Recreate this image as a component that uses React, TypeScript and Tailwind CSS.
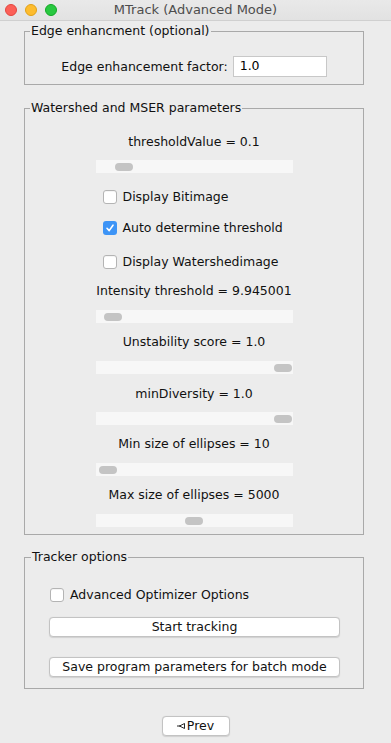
import React from 'react'

const FONT = { fontFamily: '"DejaVu Sans", "Noto Sans", sans-serif' }

function Checkbox({ checked, label }: { checked?: boolean; label: string }) {
  return (
    <div className="flex h-[16px] items-center gap-[6px]">
      {checked ? (
        <span className="flex h-[14px] w-[14px] items-center justify-center rounded-[3px] bg-[#3d94f6]">
          <svg width="10" height="10" viewBox="0 0 10 10">
            <path d="M2 5.3 L4.2 7.6 L8 2.2" fill="none" stroke="#fff" strokeWidth="1.6" strokeLinecap="round" strokeLinejoin="round" />
          </svg>
        </span>
      ) : (
        <span className="h-[14px] w-[14px] rounded-[3px] border border-[#b4b4b4] bg-white shadow-[inset_0_1px_0_rgba(0,0,0,0.04)]" />
      )}
      <span className="text-[12.5px] leading-[16px] text-[#111]">{label}</span>
    </div>
  )
}

function Slider({ pos, mt }: { pos: number; mt: string }) {
  // pos: left offset of the thumb inside the 197px track
  return (
    <div className={`relative h-[13px] w-full bg-[#f7f7f7] ${mt}`}>
      <div className="absolute top-[3px] h-[8px] w-[18px] rounded-full bg-[#c4c4c4]" style={{ left: pos }} />
    </div>
  )
}

function Label({ text, mt }: { text: string; mt: string }) {
  return <div className={`h-[16px] whitespace-nowrap text-center text-[12.5px] leading-[16px] text-[#111] ${mt}`}>{text}</div>
}

function Button({ children, className }: { children: React.ReactNode; className: string }) {
  return (
    <button className={`flex h-[20px] items-center justify-center rounded-[4px] border border-[#c3c3c3] bg-white text-[12.5px] leading-[16px] text-[#111] shadow-[0_0.5px_1px_rgba(0,0,0,0.12)] ${className}`}>
      {children}
    </button>
  )
}

export default function App() {
  return (
    <div className="h-[743px] w-[391px] overflow-hidden bg-[#ececec]" style={FONT}>
      {/* Title bar */}
      <div className="relative flex h-[21px] items-center justify-center border-b border-[#d0d0d0] bg-gradient-to-b from-[#e9e9e9] to-[#e2e2e2]">
        <div className="absolute left-[5px] top-[4px] flex gap-[8px]">
          <span className="h-[12px] w-[12px] rounded-full border border-[#e2463f] bg-[#fc5f57]" />
          <span className="h-[12px] w-[12px] rounded-full border border-[#e1a116] bg-[#fdbc2e]" />
          <span className="h-[12px] w-[12px] rounded-full border border-[#13a826] bg-[#28c840]" />
        </div>
        <span className="text-[13px] leading-[16px] text-[#4d4d4d]">MTrack (Advanced Mode)</span>
      </div>

      {/* Edge enhancement */}
      <fieldset className="ml-[24px] mt-[2px] w-[340px] border border-[#a9a9a9] px-0 pb-[7px]">
        <legend className="ml-[5px] px-[1px] text-[12.5px] leading-[16px] text-[#111]">Edge enhancment (optional)</legend>
        <div className="mt-[17px] flex items-center justify-center gap-[5px]">
          <span className="text-[12.5px] leading-[16px] text-[#111]">Edge enhancement factor:</span>
          <div className="flex h-[21px] w-[94px] items-center border border-[#c8c8c8] bg-white px-[6px] text-[12.5px] text-black">1.0</div>
        </div>
      </fieldset>

      {/* Watershed and MSER */}
      <fieldset className="ml-[24px] mt-[15px] w-[340px] border border-[#a9a9a9] px-0 pb-[7px]">
        <legend className="ml-[5px] px-[1px] text-[12.5px] leading-[16px] text-[#111]">Watershed and MSER parameters</legend>
        <div className="mx-auto w-[197px]">
          <Label text="thresholdValue = 0.1" mt="mt-[18px]" />
          <Slider pos={19} mt="mt-[10px]" />
          <div className="ml-[7px]">
            <div className="mt-[16px]"><Checkbox label="Display Bitimage" /></div>
            <div className="mt-[15px]"><Checkbox checked label="Auto determine threshold" /></div>
            <div className="mt-[18px]"><Checkbox label="Display Watershedimage" /></div>
          </div>
          <Label text="Intensity threshold = 9.945001" mt="mt-[13px]" />
          <Slider pos={8} mt="mt-[11px]" />
          <Label text="Unstability score = 1.0" mt="mt-[11px]" />
          <Slider pos={178} mt="mt-[11px]" />
          <Label text="minDiversity = 1.0" mt="mt-[12px]" />
          <Slider pos={178} mt="mt-[10px]" />
          <Label text="Min size of ellipses = 10" mt="mt-[11px]" />
          <Slider pos={3} mt="mt-[11px]" />
          <Label text="Max size of ellipses = 5000" mt="mt-[11px]" />
          <Slider pos={89} mt="mt-[11px]" />
        </div>
      </fieldset>

      {/* Tracker options */}
      <fieldset className="ml-[24px] mt-[14px] w-[340px] border border-[#a9a9a9] px-0 pb-[11px]">
        <legend className="ml-[6px] px-[1px] text-[12.5px] leading-[16px] text-[#111]">Tracker options</legend>
        <div className="ml-[25px] mt-[22px]">
          <Checkbox label="Advanced Optimizer Options" />
        </div>
        <Button className="ml-[24px] mt-[14px] w-[291px]">Start tracking</Button>
        <Button className="ml-[24px] mt-[20px] w-[291px]">Save program parameters for batch mode</Button>
      </fieldset>

      <div className="mt-[27px] flex justify-center">
        <Button className="w-[68px] gap-[2px]">
          <svg width="8" height="6" viewBox="0 0 8 6">
            <path d="M0 3 H3" stroke="#111" strokeWidth="0.9" />
            <path d="M2.5 3 L7.5 0.5 V5.5 Z" fill="none" stroke="#111" strokeWidth="0.9" strokeLinejoin="round" />
          </svg>
          <span>Prev</span>
        </Button>
      </div>
    </div>
  )
}
